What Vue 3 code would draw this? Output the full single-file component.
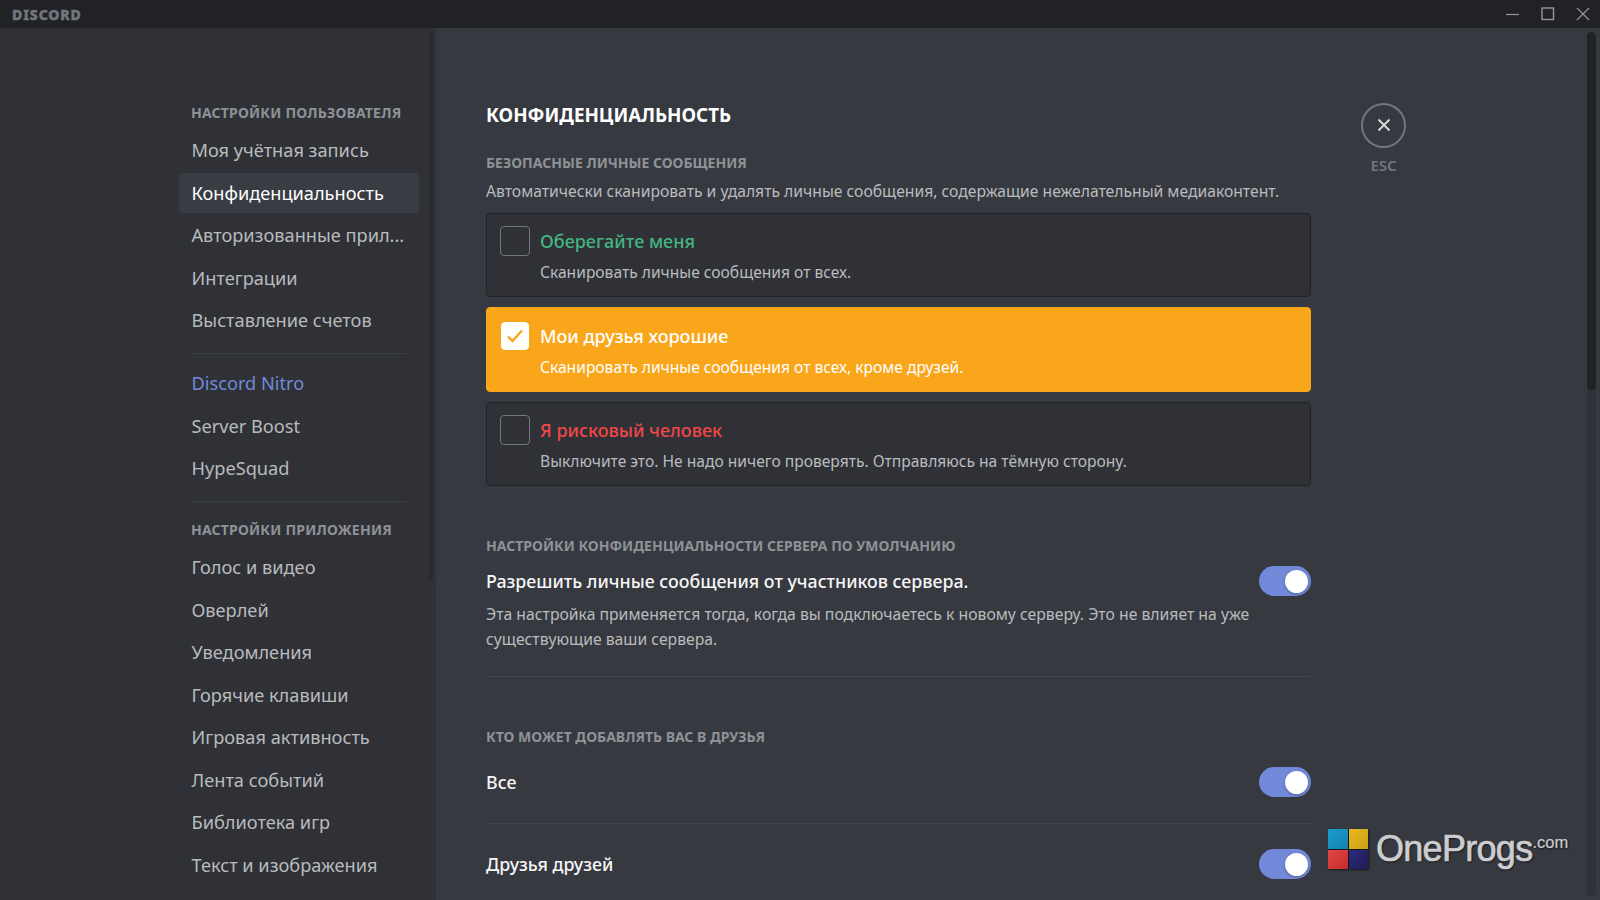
<template>
  <div class="app">
    <header class="titlebar">
      <span class="wordmark">DISCORD</span>
      <div class="win-controls">
        <svg width="14" height="14" viewBox="0 0 14 14"><path d="M0 7.5h13" stroke="#96989d" stroke-width="1.2" /></svg>
        <svg width="14" height="14" viewBox="0 0 14 14"><rect x="1" y="1" width="11.5" height="11.5" fill="none" stroke="#96989d" stroke-width="1.4" /></svg>
        <svg width="14" height="14" viewBox="0 0 14 14"><path d="M1 1l12 12M13 1L1 13" stroke="#96989d" stroke-width="1.1" /></svg>
      </div>
    </header>

    <div class="layout">
      <aside class="sidebar">
        <nav class="side-nav">
          <template v-for="(item, i) in menu" :key="i">
            <div v-if="item.type === 'header'" class="side-header">{{ item.text }}</div>
            <div v-else-if="item.type === 'sep'" class="side-sep"></div>
            <div v-else class="side-item" :class="{ active: item.active, nitro: item.nitro }">{{ item.text }}</div>
          </template>
        </nav>
        <div class="side-scroll"></div>
      </aside>

      <main class="content">
        <section class="page">
          <h2 class="page-title">КОНФИДЕНЦИАЛЬНОСТЬ</h2>

          <h5 class="label first">БЕЗОПАСНЫЕ ЛИЧНЫЕ СООБЩЕНИЯ</h5>
          <p class="lead">Автоматически сканировать и удалять личные сообщения, содержащие нежелательный медиаконтент.</p>

          <div class="options">
            <div v-for="opt in options" :key="opt.title" class="option" :class="{ selected: opt.selected }">
              <div class="box">
                <svg v-if="opt.selected" width="18" height="18" viewBox="0 0 18 18">
                  <path d="M2 9.5l4.5 4.5L16 3.5" fill="none" stroke="#faa61a" stroke-width="2.4" />
                </svg>
              </div>
              <div>
                <div class="option-title" :style="{ color: opt.color }">{{ opt.title }}</div>
                <div class="option-desc">{{ opt.desc }}</div>
              </div>
            </div>
          </div>

          <h5 class="label second">НАСТРОЙКИ КОНФИДЕНЦИАЛЬНОСТИ СЕРВЕРА ПО УМОЛЧАНИЮ</h5>
          <div class="switch-row server-row">
            <span class="switch-label">Разрешить личные сообщения от участников сервера.</span>
            <span class="toggle"><i></i></span>
          </div>
          <p class="note">Эта настройка применяется тогда, когда вы подключаетесь к новому серверу. Это не влияет на уже существующие ваши сервера.</p>
          <div class="divider big"></div>

          <h5 class="label third">КТО МОЖЕТ ДОБАВЛЯТЬ ВАС В ДРУЗЬЯ</h5>
          <div class="switch-row friend-row">
            <span class="switch-label">Все</span>
            <span class="toggle"><i></i></span>
          </div>
          <div class="divider"></div>
          <div class="switch-row friend-row">
            <span class="switch-label">Друзья друзей</span>
            <span class="toggle"><i></i></span>
          </div>
        </section>

        <div class="tools">
          <button class="close-btn">
            <svg width="14" height="14" viewBox="0 0 14 14"><path d="M1.5 1.5l11 11M12.5 1.5l-11 11" stroke="#dcddde" stroke-width="1.8" /></svg>
          </button>
          <span class="esc">ESC</span>
        </div>

        <div class="main-scroll"><div class="main-thumb"></div></div>

        <div class="watermark">
          <div class="wm-logo">
            <span class="c1"></span><span class="c2"></span><span class="c3"></span><span class="c4"></span>
          </div>
          <span class="wm-name">OneProgs</span><span class="wm-tld">.com</span>
        </div>
      </main>
    </div>
  </div>
</template>

<script setup>
const menu = [
  { type: 'header', text: 'НАСТРОЙКИ ПОЛЬЗОВАТЕЛЯ' },
  { text: 'Моя учётная запись' },
  { text: 'Конфиденциальность', active: true },
  { text: 'Авторизованные прил...' },
  { text: 'Интеграции' },
  { text: 'Выставление счетов' },
  { type: 'sep' },
  { text: 'Discord Nitro', nitro: true },
  { text: 'Server Boost' },
  { text: 'HypeSquad' },
  { type: 'sep' },
  { type: 'header', text: 'НАСТРОЙКИ ПРИЛОЖЕНИЯ' },
  { text: 'Голос и видео' },
  { text: 'Оверлей' },
  { text: 'Уведомления' },
  { text: 'Горячие клавиши' },
  { text: 'Игровая активность' },
  { text: 'Лента событий' },
  { text: 'Библиотека игр' },
  { text: 'Текст и изображения' }
]

const options = [
  { title: 'Оберегайте меня', desc: 'Сканировать личные сообщения от всех.', color: '#43b581' },
  { title: 'Мои друзья хорошие', desc: 'Сканировать личные сообщения от всех, кроме друзей.', color: '#fff', selected: true },
  { title: 'Я рисковый человек', desc: 'Выключите это. Не надо ничего проверять. Отправляюсь на тёмную сторону.', color: '#f04747' }
]
</script>

<style>
html, body { margin: 0; height: 100%; overflow: hidden; background: #36393f; }
</style>

<style scoped>
.app {
  width: 1600px;
  height: 900px;
  display: flex;
  flex-direction: column;
  overflow: hidden;
  font-family: "Noto Sans", "Open Sans", sans-serif;
}
.titlebar {
  height: 28px;
  flex: none;
  background: #202225;
  display: flex;
  align-items: center;
  justify-content: space-between;
  padding: 0 10px 0 12px;
}
.wordmark {
  font-size: 14px;
  font-weight: 800;
  letter-spacing: 0.9px;
  color: #72767d;
  -webkit-text-stroke: 0.5px #72767d;
}
.win-controls {
  display: flex;
  gap: 21px;
}
.layout {
  flex: 1;
  display: flex;
  min-height: 0;
}
.sidebar {
  width: 436px;
  flex: none;
  background: #2f3136;
  display: flex;
  justify-content: flex-end;
  overflow: hidden;
}
.side-nav {
  width: 240px;
  margin-right: 10px;
  padding-top: 75px;
}
.side-scroll {
  width: 4px;
  height: 548px;
  margin: 4px 3px 0 0;
  border-radius: 2px;
  background: #292b2f;
}
.side-header {
  height: 20px;
  line-height: 20px;
  padding: 0 12px;
  margin-bottom: 7px;
  font-size: 14px;
  letter-spacing: 0.2px;
  font-weight: 700;
  color: #8e9297;
  white-space: nowrap;
}
.side-item {
  height: 40px;
  line-height: 40px;
  margin-bottom: 2.5px;
  padding: 0 12.5px;
  border-radius: 4px;
  font-size: 18.2px;
  color: #b9bbbe;
  white-space: nowrap;
}
.side-item.active {
  background: #393c43;
  color: #fff;
}
.side-item.nitro { color: #7289da; }
.side-sep {
  height: 1px;
  margin: 13px 12px 9px;
  background: #3b3e44;
}
.side-sep + .side-header { margin-top: 18px; }
.content {
  position: relative;
  flex: 1;
  display: flex;
  min-width: 0;
  overflow: hidden;
  background: #36393f;
}
.page {
  width: 825px;
  flex: none;
  margin-left: 50px;
  padding-top: 74px;
}
.page-title {
  margin: 0;
  height: 26px;
  line-height: 26px;
  font-size: 18.75px;
  font-weight: 700;
  color: #fff;
}
.label {
  margin: 0;
  height: 20px;
  line-height: 20px;
  font-size: 14px;
  font-weight: 700;
  color: #8e9297;
}
.label.first { margin-top: 25px; }
.lead {
  margin: 6px 0 9px;
  height: 25px;
  line-height: 25px;
  font-size: 15.7px;
  color: #b9bbbe;
}
.options {
  display: flex;
  flex-direction: column;
  gap: 10px;
}
.option {
  height: 84px;
  box-sizing: border-box;
  padding: 12px 13px;
  display: flex;
  gap: 10px;
  background: #2f3136;
  border: 1px solid #202225;
  border-radius: 4px;
}
.option.selected {
  height: 85px;
  padding-top: 13px;
  background: #faa61a;
  border-color: #faa61a;
}
.box {
  width: 30px;
  height: 30px;
  flex: none;
  box-sizing: border-box;
  border: 1px solid #72767d;
  border-radius: 4px;
  display: flex;
  align-items: center;
  justify-content: center;
}
.selected .box {
  background: #fff;
  border-color: #fff;
  width: 28px;
  height: 28px;
  margin: 1px;
}
.option-title {
  height: 30px;
  line-height: 30px;
  font-size: 18px;
  font-weight: 500;
}
.option-desc {
  margin-top: 4px;
  line-height: 24px;
  font-size: 15.6px;
  color: #b9bbbe;
}
.selected .option-desc { color: #fff; }
.label.second { margin-top: 50px; }
.switch-row {
  display: flex;
  align-items: center;
  justify-content: space-between;
}
.server-row { margin-top: 10px; height: 30px; }
.friend-row { height: 30px; }
.switch-label {
  font-size: 17.8px;
  font-weight: 500;
  color: #f6f6f7;
}
.toggle {
  width: 52px;
  height: 30px;
  flex: none;
  box-sizing: border-box;
  padding: 3.5px 3.5px;
  border-radius: 15px;
  background: #7289da;
  display: flex;
  justify-content: flex-end;
}
.toggle i {
  width: 23px;
  height: 23px;
  border-radius: 50%;
  background: #fff;
  box-shadow: 0 1px 3px rgba(0, 0, 0, 0.3);
}
.note {
  margin: 6px 0 0;
  line-height: 25px;
  font-size: 15.75px;
  color: #b9bbbe;
}
.divider {
  height: 1px;
  margin: 26px 0 25px;
  background: #42454a;
}
.divider.big { margin: 24px 0 50px; }
.label.third { margin-bottom: 20px; }
.tools {
  margin: 75px 0 0 50px;
  width: 45px;
  display: flex;
  flex-direction: column;
  align-items: center;
}
.close-btn {
  width: 45px;
  height: 45px;
  padding: 0 0 1px;
  box-sizing: border-box;
  border: 2.5px solid #72767d;
  border-radius: 50%;
  background: none;
  display: flex;
  align-items: center;
  justify-content: center;
}
.esc {
  margin-top: 7px;
  line-height: 20px;
  font-size: 15px;
  font-weight: 600;
  color: #72767d;
}
.main-scroll {
  position: absolute;
  top: 4px;
  right: 4px;
  bottom: 4px;
  width: 9px;
  border-radius: 5px;
  background: #2f3136;
}
.main-thumb {
  height: 358px;
  border-radius: 5px;
  background: #202225;
}
.watermark {
  position: absolute;
  left: 892px;
  top: 801px;
  display: flex;
  align-items: center;
  font-family: "Liberation Sans", Arial, sans-serif;
  color: #cdcdcf;
  text-shadow: 1px 1px 2px rgba(0, 0, 0, 0.7);
}
.wm-logo {
  width: 40px;
  height: 40px;
  margin-right: 8px;
  display: grid;
  grid-template-columns: 1fr 1fr;
  gap: 1px;
  background: #15151c;
  box-shadow: 1px 1px 2px rgba(0, 0, 0, 0.6);
}
.c1 { background: linear-gradient(135deg, #1b9ad0, #1583ad); }
.c2 { background: linear-gradient(135deg, #e9b81b, #c9a019); }
.c3 { background: linear-gradient(135deg, #e04a46, #c52a2c); }
.c4 { background: linear-gradient(135deg, #2c2a78, #1f1d58); }
.wm-name {
  font-size: 36px;
  line-height: 40px;
  font-weight: 400;
  letter-spacing: -0.7px;
  -webkit-text-stroke: 0.7px #cdcdcf;
}
.wm-tld {
  align-self: flex-start;
  margin-top: 3px;
  font-size: 16.5px;
  line-height: 20px;
  -webkit-text-stroke: 0.2px #cdcdcf;
}
</style>
